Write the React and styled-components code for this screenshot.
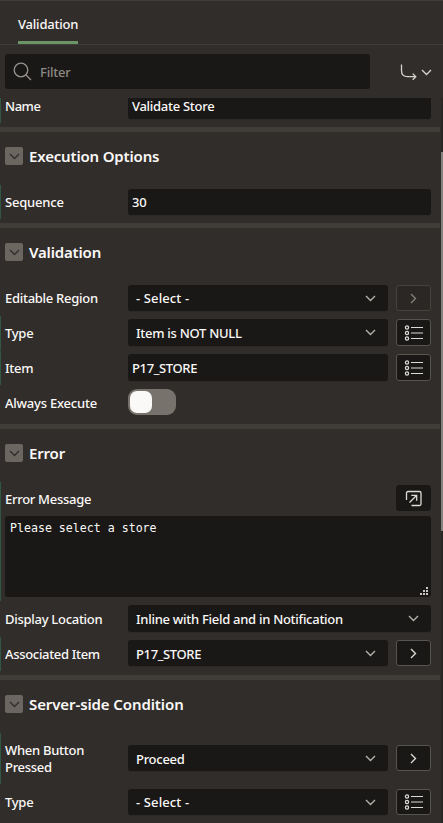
import React from "react";
import styled, { createGlobalStyle } from "styled-components";

const Global = createGlobalStyle`
  * { box-sizing: border-box; }
  html, body { margin: 0; background: #312d2a; overflow: hidden; }
  body { font-family: "Noto Sans", "Open Sans", sans-serif; font-size: 13px; font-weight: 500; color: #fbf9f8; }
  button, input, textarea { font: inherit; color: inherit; }
`;

const Panel = styled.div`
  width: 443px;
  height: 823px;
  display: flex;
  flex-direction: column;
  overflow: hidden;
  background: #312d2a;
  border-top: 1px solid #413d39;
`;

const Tabs = styled.nav`
  height: 44px;
  flex: none;
  display: flex;
  padding-left: 18px;
  border-bottom: 1px solid #413d39;
`;

const Tab = styled.button`
  width: 60px;
  height: 43px;
  padding: 5px 0 0;
  border: 0;
  border-bottom: 3px solid #6b9466;
  background: none;
  text-align: left;
  white-space: nowrap;
  letter-spacing: -0.2px;
`;

const Toolbar = styled.div`
  height: 53px;
  flex: none;
  display: flex;
  align-items: flex-start;
  padding: 9px 0 0 5px;
`;

const Search = styled.div`
  width: 365px;
  height: 35px;
  display: flex;
  align-items: center;
  gap: 8px;
  padding-left: 8px;
  border-radius: 3px;
  background: #191816;
  color: #8d8984;
  letter-spacing: -0.2px;
  svg { color: #97938f; }
`;

const GoTo = styled.button`
  display: flex;
  align-items: center;
  gap: 4px;
  height: 35px;
  margin-left: 30px;
  padding: 1px 0 0;
  border: 0;
  background: none;
  color: #d5d2ce;
`;

const Body = styled.div`
  flex: 1;
  min-height: 0;
  display: flex;
`;

const Properties = styled.div`
  width: 440px;
  flex: none;
  overflow: hidden;
`;

const Scrollbar = styled.div`
  width: 2px;
  margin-left: 1px;
  padding-top: 54px;
  background: #292725;
`;

const Thumb = styled.div`
  height: 379px;
  background: #83817e;
`;

const Section = styled.section`
  height: ${(p) => p.$h}px;
  border-top: 5px solid #403c38;
`;

const SectionHead = styled.header`
  display: flex;
  align-items: center;
  gap: 6px;
  height: 53px;
  padding: 15px 0 20px 5px;
`;

const Collapse = styled.button`
  width: 18px;
  height: 18px;
  display: flex;
  align-items: center;
  justify-content: center;
  padding: 1px 0 0;
  border: 0;
  border-radius: 2px;
  background: #6b6660;
  color: #312d2a;
`;

const Title = styled.h2`
  margin: 0;
  font-size: 15px;
  line-height: 20px;
  font-weight: 600;
  white-space: nowrap;
  letter-spacing: ${(p) => p.$ls ?? -0.17}px;
`;

const Row = styled.div`
  display: flex;
  align-items: flex-start;
  height: ${(p) => p.$h}px;
  margin-bottom: ${(p) => p.$gap || 0}px;
  padding-top: ${(p) => p.$pt}px;
  border-left: 1px solid ${(p) => (p.$changed ? "#2f5743" : "transparent")};
`;

const Label = styled.label`
  width: 123px;
  flex: none;
  margin: ${(p) => p.$mt ?? 4}px 0 0 4px;
  line-height: ${(p) => p.$lh || 18}px;
  white-space: pre;
  letter-spacing: ${(p) => p.$ls ?? -0.28}px;
`;

const Field = styled.div`
  width: ${(p) => (p.$wide ? 303 : 260)}px;
  height: ${(p) => p.$h || 26}px;
  flex: none;
  display: flex;
  align-items: center;
  justify-content: space-between;
  padding: 0 12px 0 ${(p) => (p.$select ? 8 : 4)}px;
  border-radius: ${(p) => (p.$cut ? "0 0 3px 3px" : "3px")};
  background: #191816;
  white-space: nowrap;
  letter-spacing: ${(p) => p.$ls ?? -0.28}px;
  box-shadow: 0 1px 0 #2c2926;
  span { margin-top: ${(p) => p.$shift || 0}px; }
  svg { color: #b5b2ae; }
`;

const SideButton = styled.button`
  width: 35px;
  height: ${(p) => p.$h || 26}px;
  flex: none;
  display: flex;
  align-items: center;
  justify-content: center;
  margin-left: 8px;
  padding: 0;
  border: 1px solid ${(p) => (p.$off ? "#45413d" : "#57534e")};
  border-radius: 3px;
  background: ${(p) => (p.$off ? "#2a2724" : "#191816")};
  color: ${(p) => (p.$off ? "#858079" : "#dedbd7")};
`;

const ExpandButton = styled(SideButton)`
  margin-left: 268px;
  border-color: #191816;
`;

const Switch = styled.button`
  width: 48px;
  height: 26px;
  padding: 2px;
  border: 0;
  border-radius: 9px;
  background: #77726c;
`;

const Knob = styled.span`
  display: block;
  width: 22px;
  height: 22px;
  border-radius: 7px;
  background: #fbf9f8;
`;

const MessageGroup = styled.div`
  height: 119px;
  margin-bottom: 1px;
  border-left: 1px solid #2f5743;
`;

const MessageHead = styled.div`
  display: flex;
  height: 34px;
  padding-top: 3px;
`;

const MessageBox = styled.div`
  display: flex;
  align-items: flex-end;
  justify-content: space-between;
  width: 426px;
  height: 81px;
  margin-left: 4px;
  padding: 0 3px 2px 5px;
  border-radius: 3px;
  background: #191816;
  font: 11.6px/16px "DejaVu Sans Mono", monospace;
  p { align-self: flex-start; margin: 4px 0 0; }
`;

const Chevron = ({ right }) => (
  <svg width={right ? 7 : 11} height={right ? 11 : 7} viewBox={right ? "0 0 7 11" : "0 0 11 7"} fill="none" stroke="currentColor" strokeWidth="1.35">
    <path d={right ? "M1 1l4.5 4.5L1 10" : "M1 1l4.5 4.5L10 1"} />
  </svg>
);

const SearchIcon = () => (
  <svg width="19" height="19" viewBox="0 0 19 19" fill="none" stroke="currentColor" strokeWidth="1.3">
    <circle cx="8" cy="8" r="6.8" />
    <path d="M13 13l5 5" />
  </svg>
);

const ReturnIcon = () => (
  <svg width="17" height="17" viewBox="0 0 17 17" fill="none" stroke="currentColor" strokeWidth="1.3">
    <path d="M1.5 .5v6.2c0 3.8 2 6 6 6H16M12.7 9.6l3.1 3.1-3.1 3.1" />
  </svg>
);

const ListIcon = () => (
  <svg width="19" height="16" viewBox="0 0 19 16" fill="none" stroke="currentColor" strokeWidth="1.25">
    <circle cx="3" cy="2.5" r="1.6" />
    <circle cx="3" cy="8" r="1.6" />
    <circle cx="3" cy="13.5" r="1.6" />
    <path d="M7 2.5h12M7 8h12M7 13.5h12" strokeWidth="1.1" />
  </svg>
);

const PopOutIcon = () => (
  <svg width="17" height="17" viewBox="0 0 17 17" fill="none" stroke="currentColor" strokeWidth="1.3">
    <path d="M1.5 10V3q0-1.500 1.500-1.500h11.500q1.500 0 1.500 1.500v11q0 1.500-1.500 1.500H6.500" />
    <path d="M4.500 12.500l7-7M6.300 5.300h5.400v5.400" />
  </svg>
);

const Grip = () => (
  <svg width="8" height="8" viewBox="0 0 8 8" fill="#c9c7c4">
    <path d="M6 0h2v2H6zM3 3h2v2H3zM6 3h2v2H6zM0 6h2v2H0zM3 6h2v2H3zM6 6h2v2H6z" />
  </svg>
);

const Head = ({ children, ls }) => (
  <SectionHead>
    <Collapse><Chevron /></Collapse>
    <Title $ls={ls}>{children}</Title>
  </SectionHead>
);

export default function App() {
  return (
    <>
      <Global />
      <Panel>
        <Tabs><Tab>Validation</Tab></Tabs>
        <Toolbar>
          <Search><SearchIcon /><span>Filter</span></Search>
          <GoTo><ReturnIcon /><Chevron /></GoTo>
        </Toolbar>
        <Body>
          <Properties>
            <Row $h={25} $gap={4} $pt={0} $changed>
              <Label $mt={-1} $ls={-0.45}>Name</Label>
              <Field $wide $cut $h={21} $shift={-5}><span>Validate Store</span></Field>
            </Row>
            <Section $h={96}>
              <Head>Execution Options</Head>
              <Row $h={34} $pt={4} $changed>
                <Label $ls={-0.2}>Sequence</Label>
                <Field $wide><span>30</span></Field>
              </Row>
            </Section>
            <Section $h={201}>
              <Head>Validation</Head>
              <Row $h={35} $pt={4}>
                <Label>Editable Region</Label>
                <Field $select $ls={0.12}><span>- Select -</span><Chevron /></Field>
                <SideButton $off><Chevron right /></SideButton>
              </Row>
              <Row $h={34} $gap={1} $pt={3} $changed>
                <Label $mt={5}>Type</Label>
                <Field $select $h={27}><span>Item is NOT NULL</span><Chevron /></Field>
                <SideButton $h={27}><ListIcon /></SideButton>
              </Row>
              <Row $h={34} $gap={1} $pt={3} $changed>
                <Label $mt={5}>Item</Label>
                <Field $h={27} $ls={-0.36}><span>P17_STORE</span></Field>
                <SideButton $h={27}><ListIcon /></SideButton>
              </Row>
              <Row $h={34} $pt={3}>
                <Label $mt={5} $ls={-0.22}>Always Execute</Label>
                <Switch><Knob /></Switch>
              </Row>
            </Section>
            <Section $h={251}>
              <Head>Error</Head>
              <MessageGroup>
                <MessageHead>
                  <Label $mt={5}>Error Message</Label>
                  <ExpandButton><PopOutIcon /></ExpandButton>
                </MessageHead>
                <MessageBox><p>Please select a store</p><Grip /></MessageBox>
              </MessageGroup>
              <Row $h={35} $pt={3}>
                <Label $mt={5}>Display Location</Label>
                <Field $wide $select $h={27}><span>Inline with Field and in Notification</span><Chevron /></Field>
              </Row>
              <Row $h={34} $pt={3} $changed>
                <Label $mt={5} $ls={-0.32}>Associated Item</Label>
                <Field $select $ls={-0.36} $shift={2}><span>P17_STORE</span><Chevron /></Field>
                <SideButton><Chevron right /></SideButton>
              </Row>
            </Section>
            <Section $h={148}>
              <Head ls={-0.1}>Server-side Condition</Head>
              <Row $h={51} $gap={1} $pt={12} $changed>
                <Label $mt={-3} $lh={17}>{"When Button\nPressed"}</Label>
                <Field $select $shift={1}><span>Proceed</span><Chevron /></Field>
                <SideButton><Chevron right /></SideButton>
              </Row>
              <Row $h={38} $pt={4}>
                <Label>Type</Label>
                <Field $select $ls={0.12}><span>- Select -</span><Chevron /></Field>
                <SideButton><ListIcon /></SideButton>
              </Row>
            </Section>
          </Properties>
          <Scrollbar><Thumb /></Scrollbar>
        </Body>
      </Panel>
    </>
  );
}
